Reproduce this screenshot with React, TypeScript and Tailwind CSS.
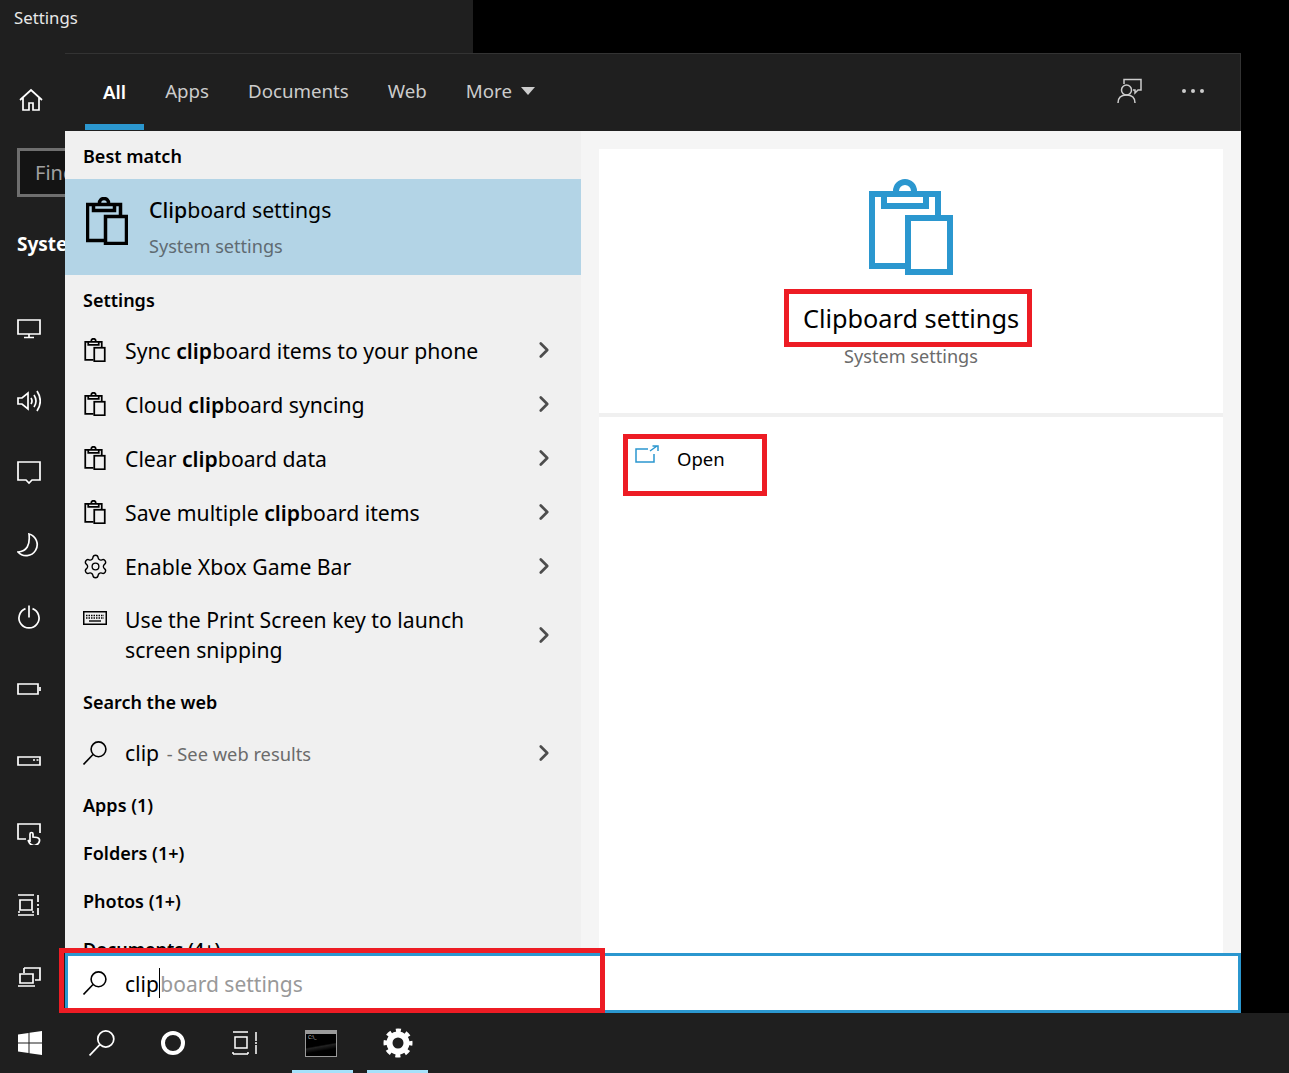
import { ChevronRight, Settings as Gear } from "lucide-react"
import type { ReactNode } from "react"

function ClipboardIcon({ className, strokeWidth = 7 }: { className: string; strokeWidth?: number }) {
  return (
    <svg viewBox="0 0 84 96" fill="none" stroke="currentColor" strokeWidth={strokeWidth} className={className}>
      <path d="M36 87H3V15H69V36" />
      <path d="M15 15V27H57V15" />
      <path d="M27 15V12a9 9 0 0 1 18 0V15" />
      <rect x="39" y="39" width="42" height="54" />
    </svg>
  )
}

function SearchIcon({ className }: { className: string }) {
  return (
    <svg viewBox="0 0 24 24" fill="none" stroke="currentColor" strokeWidth="1.6" className={className}>
      <circle cx="15.500" cy="8.300" r="7.400" />
      <path d="M10 13.500 0.500 23.500" />
    </svg>
  )
}

function KeyboardIcon() {
  return (
    <svg viewBox="0 0 24 14" fill="none" stroke="currentColor" className="h-[14px] w-6">
      <rect x="0.75" y="0.75" width="22.5" height="12.5" strokeWidth="1.5" />
      <path d="M3 4.5h18M3 7h18" strokeWidth="1.4" strokeDasharray="1.5 1" />
      <path d="M6 10h12" strokeWidth="1.4" />
    </svg>
  )
}

const sideIcons: ReactNode[] = [
  <path key="monitor" d="M1 3h22v14H1zM12 17v3M7 20.500h10" />,
  <path key="sound" d="M1 9v6h4l6 5V4L5 9zM14 9q2 3 0 6M17 6q4 6 0 12M20 2q6.500 10 0 20" />,
  <path key="message" d="M1 1h22v18h-8l-3 3-3-3H1z" />,
  <path key="moon" d="M12 1A11 11 0 1 1 1 19Q14 18 12 1z" />,
  <path key="power" d="M8.500 3.600a10 10 0 1 0 7 0M12 0.500v12" />,
  <path key="battery" d="M1 7h20v10H1zM23 10v4" />,
  <path key="storage" d="M1 8h22v8H1zM16 11h2M19.500 11h2" />,
  <path key="tablet" d="M9 18H1V3h22v9M13 21v-8a1.500 1.500 0 0 1 3 0v3l4 .5q3 .5 2.500 3.500a5.500 5.500 0 0 1-10 2L11 19" />,
  <path key="multitask" d="M1 2h16M1 22h16M1 19h2M15 19h2M3 7h12v10H3zM21 2v7M21 15v7M21 11v2" />,
  <path key="remote" d="M7 3h16v12h-5M7 3v5M3 9h13v9H3zM1 21h17" />,
]

const rows = [
  { before: "Sync ", hit: "clip", after: "board items to your phone", icon: "clip" },
  { before: "Cloud ", hit: "clip", after: "board syncing", icon: "clip" },
  { before: "Clear ", hit: "clip", after: "board data", icon: "clip" },
  { before: "Save multiple ", hit: "clip", after: "board items", icon: "clip" },
  { before: "Enable Xbox Game Bar", hit: "", after: "", icon: "gear" },
]

function RowChevron() {
  return <ChevronRight className="h-[26px] w-[26px] shrink-0 text-[#4d4d4d]" strokeWidth={2.5} />
}

function SectionLabel({ children }: { children: ReactNode }) {
  return <div className="flex h-12 items-center pl-[18px] pt-[2px] text-[18px] font-semibold text-black">{children}</div>
}

function SettingsWindow() {
  return (
    <div className="absolute left-0 top-0 flex h-[1013px] w-[473px] flex-col bg-[#1f1f1f] text-white">
      <div className="flex h-9 items-center pl-[14px] text-[16.800px] text-[#e8e8e8]">Settings</div>
      <div className="mt-[53px] pl-[19px]">
        <svg viewBox="0 0 24 24" fill="none" stroke="currentColor" strokeWidth="1.7" className="h-6 w-6">
          <path d="M1 12 12 2l11 10M4 10v12h6v-7h4v7h6V10" />
        </svg>
      </div>
      <div className="ml-[17px] mt-[36px] flex h-[50px] w-[400px] items-center border-[3px] border-[#6e6e6e] bg-[#141414] pl-[15px] text-[20px] text-[#a0a0a0]">
        Find a setting
      </div>
      <div className="mt-[32px] pl-[17px] text-[19px] font-bold leading-[30px]">System</div>
      <div className="mt-[34px] flex flex-col pl-[17px]">
        {sideIcons.map((icon, i) => (
          <div key={i} className="flex h-[72px] items-center">
            <svg viewBox="0 0 24 24" fill="none" stroke="currentColor" strokeWidth="1.7" className="h-6 w-6">
              {icon}
            </svg>
          </div>
        ))}
      </div>
    </div>
  )
}

function ResultsPane() {
  return (
    <div className="w-[516px] shrink-0 overflow-hidden bg-[#f0f0f0] text-black">
      <SectionLabel>Best match</SectionLabel>
      <div className="flex h-24 items-center bg-[#b3d4e6] pl-[21px]">
        <ClipboardIcon className="mb-3 h-12 w-[42px] shrink-0" />
        <div className="ml-[21px] pb-[2px]">
          <div className="text-[21.250px] leading-8">
            <span className="font-medium">Clip</span>board settings
          </div>
          <div className="mt-2 text-[18.100px] leading-6 text-[#5f6b72]">System settings</div>
        </div>
      </div>
      <SectionLabel>Settings</SectionLabel>
      {rows.map((r) => (
        <div key={r.before} className="flex h-[54px] items-center pl-[18px] pr-[24px]">
          <div className="flex w-6 shrink-0 justify-center">
            {r.icon === "clip" ? (
              <ClipboardIcon className="h-[24px] w-[22px]" />
            ) : (
              <Gear className="h-[27px] w-[27px] shrink-0" strokeWidth={1.2} />
            )}
          </div>
          <div className="ml-[18px] flex-1 pt-[2px] text-[21.200px]">
            {r.before}
            <span className="font-semibold">{r.hit}</span>
            {r.after}
          </div>
          <RowChevron />
        </div>
      ))}
      <div className="flex h-[84px] items-center pl-[18px] pr-[24px]">
        <div className="flex w-6 shrink-0 self-start pt-[18px]">
          <KeyboardIcon />
        </div>
        <div className="ml-[18px] flex-1 text-[21.200px] leading-[30px]">
          Use the Print Screen key to launch
          <br />
          screen snipping
        </div>
        <RowChevron />
      </div>
      <SectionLabel>Search the web</SectionLabel>
      <div className="flex h-[55px] items-center pl-[18px] pr-[24px]">
        <SearchIcon className="h-6 w-6 shrink-0" />
        <div className="ml-[18px] flex-1 text-[21.200px]">
          clip <span className="ml-[2px] text-[18.300px] text-[#6b6b6b]">- See web results</span>
        </div>
        <RowChevron />
      </div>
      <SectionLabel>Apps (1)</SectionLabel>
      <SectionLabel>Folders (1+)</SectionLabel>
      <SectionLabel>Photos (1+)</SectionLabel>
      <SectionLabel>Documents (4+)</SectionLabel>
    </div>
  )
}

function PreviewPane() {
  return (
    <div className="flex min-w-0 flex-1 flex-col bg-[#f5f5f5] px-[18px] pt-[18px]">
      <div className="flex flex-1 flex-col bg-white">
        <div className="flex h-[268px] flex-col items-center border-b-4 border-[#f0f0f0] pt-[30px]">
          <ClipboardIcon className="h-24 w-[84px] text-[#2b97cf]" strokeWidth={6} />
          <div className="mt-[23px] text-[25.300px] leading-[40px] text-black">Clipboard settings</div>
          <div className="mt-[6px] text-[18.100px] leading-6 text-[#6b6b6b]">System settings</div>
        </div>
        <div className="flex items-start pl-[36px] pt-[28px] text-black">
          <svg viewBox="0 0 24 18" fill="none" stroke="#2b97cf" strokeWidth="1.5" className="h-[18px] w-6">
            <path d="M13 4H1v13h18V9M15 6l7-5M17.500 1H23v5" />
          </svg>
          <div className="ml-[18px] text-[18.500px]">Open</div>
        </div>
      </div>
    </div>
  )
}

function SearchPanel() {
  return (
    <div className="absolute left-[65px] top-[53px] flex h-[960px] w-[1176px] flex-col">
      <div className="flex h-[78px] shrink-0 border-r border-t border-[#333333] bg-[#1f1f1f] pb-px pl-[20px] pr-[36px] text-[#cccccc]">
        <div className="flex gap-[3px] text-[18.700px]">
          <div className="flex items-center border-y-[6px] border-t-transparent border-b-[#2b97cf] px-[18px] font-semibold text-white">
            All
          </div>
          {["Apps", "Documents", "Web"].map((t) => (
            <div key={t} className="flex items-center px-[18px] pb-[2px]">
              {t}
            </div>
          ))}
          <div className="flex items-center gap-[9px] px-[18px] pb-[2px]">
            More
            <span className="h-0 w-0 border-x-[7px] border-t-[8px] border-x-transparent border-t-[#cccccc]" />
          </div>
        </div>
        <div className="ml-auto flex items-center gap-[39px] pb-[2px]">
          <svg viewBox="0 0 26 26" fill="none" stroke="currentColor" strokeWidth="1.5" className="h-[26px] w-[26px]">
            <path d="M7 6V1.500h17V12h-3l-3 3v-3h-2" />
            <circle cx="9.500" cy="12" r="5" />
            <path d="M1 25q0-8 8.500-8T18 25" />
          </svg>
          <div className="flex gap-[5px]">
            <span className="h-1 w-1 rounded-full bg-[#cccccc]" />
            <span className="h-1 w-1 rounded-full bg-[#cccccc]" />
            <span className="h-1 w-1 rounded-full bg-[#cccccc]" />
          </div>
        </div>
      </div>
      <div className="flex min-h-0 flex-1">
        <ResultsPane />
        <PreviewPane />
      </div>
      <div className="flex h-[60px] shrink-0 items-center border-[3px] border-[#2b97cf] bg-white pl-[15px] text-[21px] text-black">
        <SearchIcon className="h-6 w-6" />
        <span className="ml-[18px] pt-1">clip</span>
        <span className="h-[30px] w-[1.500px] bg-black" />
        <span className="pt-1 text-[#999999]">board settings</span>
      </div>
    </div>
  )
}

function Taskbar() {
  return (
    <div className="flex h-[60px] shrink-0 items-center bg-[#1f1f1f] text-white">
      <div className="flex w-[59px] justify-center pl-[1px]">
        <svg viewBox="0 0 24 24" fill="currentColor" className="h-6 w-6">
          <path d="M0 3.500 10.500 2v9.500H0zM11.500 1.800 24 0v11.500H11.500zM0 12.500h10.500V22L0 20.500zM11.500 12.500H24V24l-12.500-1.800z" />
        </svg>
      </div>
      <div className="flex w-[85px] justify-center">
        <SearchIcon className="h-[26px] w-[26px]" />
      </div>
      <div className="flex w-[58px] justify-center">
        <span className="h-6 w-6 rounded-full border-[4px] border-white" />
      </div>
      <div className="flex w-[86px] justify-center">
        <svg viewBox="0 0 26 26" fill="none" stroke="currentColor" strokeWidth="1.5" className="h-[26px] w-[26px]">
          <path d="M1 2h15M1 24h15M1 24v-2M16 24v-2M3 7h12v11H3zM24 2v9M24 15v9M24 12v2" />
        </svg>
      </div>
      <div className="relative ml-1 flex h-full w-[61px] items-center justify-center pr-[3px]">
        <div className="h-[27px] w-[32px] border border-[#9a9a9a] bg-[linear-gradient(170deg,#000_55%,#222_60%,#000_75%)]">
          <div className="h-[3px] bg-[#9a9a9a]" />
          <div className="pl-[2px] text-[5px] leading-[7px] text-[#cccccc]">C:\_</div>
        </div>
        <div className="absolute bottom-0 left-0 h-[3px] w-full bg-[#a6e1fa]" />
      </div>
      <div className="relative ml-[14px] flex h-full w-[61px] items-center justify-center">
        <svg viewBox="0 0 30 30" fill="none" stroke="currentColor" className="h-[30px] w-[30px]">
          <circle cx="15" cy="15" r="8.500" strokeWidth="6" />
          <circle cx="15" cy="15" r="12.500" strokeWidth="4" strokeDasharray="5 4.820" strokeDashoffset="2.500" />
        </svg>
        <div className="absolute bottom-0 left-0 h-[3px] w-full bg-[#a6e1fa]" />
      </div>
    </div>
  )
}

export default function App() {
  const boxClass = "pointer-events-none absolute border-[5px] border-[#ed1c24]"
  return (
    <div className="flex h-[1073px] w-[1289px] flex-col overflow-hidden bg-black font-['Noto_Sans',sans-serif]">
      <div className="relative flex-1">
        <SettingsWindow />
        <SearchPanel />
        <div className={`${boxClass} left-[784px] top-[289px] h-[58px] w-[248px]`} />
        <div className={`${boxClass} left-[623px] top-[434px] h-[62px] w-[144px]`} />
        <div className={`${boxClass} left-[59px] top-[948px] h-[65px] w-[546px]`} />
      </div>
      <Taskbar />
    </div>
  )
}
